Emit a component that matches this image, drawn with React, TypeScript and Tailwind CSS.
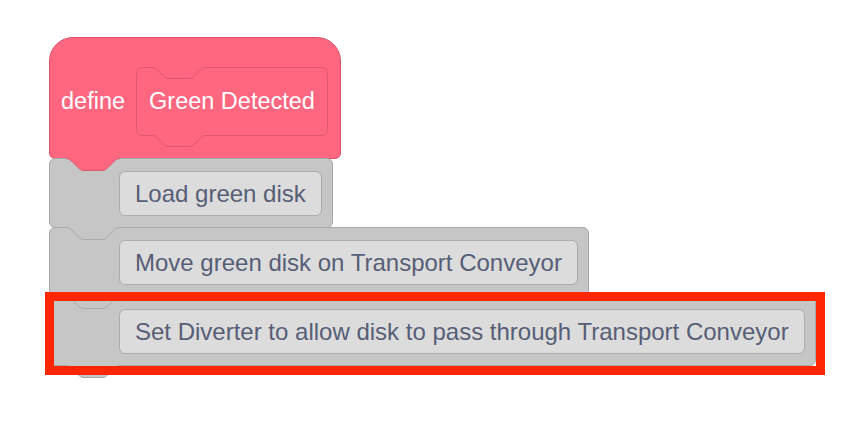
const TAB_FILL =
  "M0 0 H54 V0.5 C51 0.5 49.5 2 48 3.5 L42 9.5 C40.5 11 39 12.5 36 12.5 H18 C15 12.5 13.5 11 12 9.5 L6 3.5 C4.5 2 3 0.5 0 0.5 Z";
const TAB_EDGE =
  "M0 0.5 C3 0.5 4.5 2 6 3.5 L12 9.5 C13.5 11 15 12.5 18 12.5 H36 C39 12.5 40.5 11 42 9.5 L48 3.5 C49.5 2 51 0.5 54 0.5";

// bottom connector that drops into the notch of the block below
const Tab = ({ fill, stroke }: { fill: string; stroke: string }) => (
  <svg
    className="absolute left-[16px] top-full z-10 overflow-visible"
    width="54"
    height="14"
    viewBox="0 0 54 14"
  >
    <path d={TAB_FILL} fill={fill} />
    <path d={TAB_EDGE} fill="none" stroke={stroke} />
  </svg>
);

const PROTO_PATH =
  "M6.5 0.5 H16 C19 0.5 20.5 2 22 3.5 L28 9.5 C29.5 11 31 11.5 34 11.5 H52 C55 11.5 56.5 11 58 9.5 L64 3.5 C65.5 2 67 0.5 70 0.5 H185.5 A6 6 0 0 1 191.5 6.5 V62.5 A6 6 0 0 1 185.5 68.5 H70 C67 68.5 65.5 70 64 71.5 L58 77.5 C56.5 79 55 79.5 52 79.5 H34 C31 79.5 29.5 79 28 77.5 L22 71.5 C20.5 70 19 68.5 16 68.5 H6.5 A6 6 0 0 1 0.5 62.5 V6.5 A6 6 0 0 1 6.5 0.5 Z";

const Prototype = ({ label }: { label: string }) => (
  <div className="relative flex h-[69px] w-[192px] items-center px-[13px]">
    <svg
      className="absolute left-0 top-0 overflow-visible"
      width="192"
      height="81"
      viewBox="0 0 192 81"
    >
      <path d={PROTO_PATH} fill="#ff6680" stroke="#d95a70" />
    </svg>
    <span className="relative whitespace-nowrap text-[23.5px] leading-none text-white">
      {label}
    </span>
  </div>
);

const StackBlock = ({
  label,
  highlighted = false,
}: {
  label: string;
  highlighted?: boolean;
}) => (
  <div className="relative -mt-px flex w-fit rounded-[6px] border border-[#a9a9a9] bg-[#c6c6c6] pb-[11px] pl-[69px] pr-[10px] pt-[12px]">
    <div className="flex h-[45px] items-center whitespace-nowrap rounded-[6px] border border-[#acacac] bg-[#dcdcdc] px-[15px] text-[24px] leading-none text-[#575e75]">
      {label}
    </div>
    <Tab fill="#c6c6c6" stroke="#a9a9a9" />
    {highlighted && (
      <div className="pointer-events-none absolute -bottom-[10px] -left-[5px] -right-[10px] -top-[5px] z-20 border-[9px] border-[#ff2600]" />
    )}
  </div>
);

export default function App() {
  return (
    <div className="h-[424px] w-[864px] overflow-hidden bg-white pl-[49px] pt-[37px] font-['Liberation_Sans',Arial,sans-serif]">
      <div className="flex flex-col items-start">
        <div className="relative flex h-[122px] w-fit items-start rounded-b-[6px] rounded-t-[24px] border border-[#e0516b] bg-[#ff6680] pl-[11px] pr-[12px] pt-[29px]">
          <div className="flex items-center gap-[11px]">
            <span className="text-[23.5px] leading-none text-white">define</span>
            <Prototype label="Green Detected" />
          </div>
          <Tab fill="#ff6680" stroke="#d95a70" />
        </div>
        <StackBlock label="Load green disk" />
        <StackBlock label="Move green disk on Transport Conveyor" />
        <StackBlock
          label="Set Diverter to allow disk to pass through Transport Conveyor"
          highlighted
        />
      </div>
    </div>
  );
}
